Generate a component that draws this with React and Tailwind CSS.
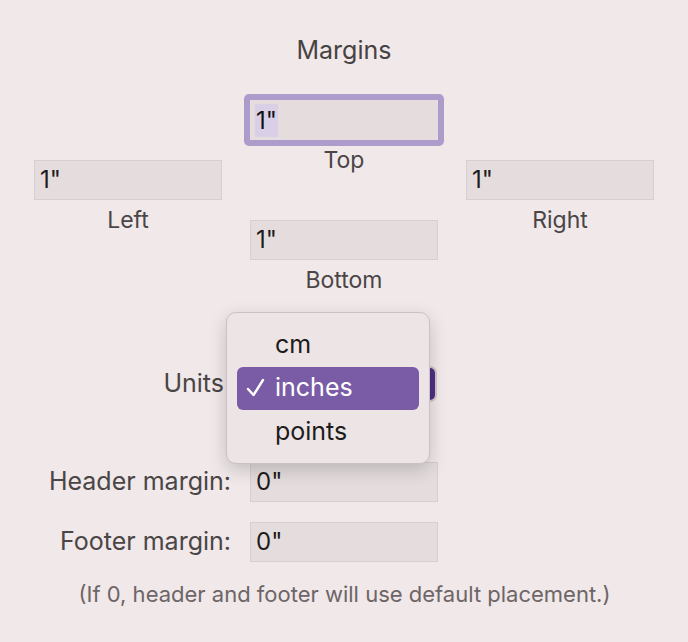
import React from 'react';

const font = { fontFamily: 'Inter, "Noto Sans", sans-serif' };

function Field({ value, className = '' }) {
  return (
    <div className={`h-10 w-[188px] bg-[#e5dddd] border border-[#d8d0d0] flex items-center px-[5px] text-[24px] text-[#1d1b1b] ${className}`}>
      {value}
    </div>
  );
}

function Label({ children }) {
  return (
    <div className="h-10 flex items-center justify-center text-[23px] text-[#4a4546]">{children}</div>
  );
}

export default function App() {
  return (
    <div className="w-[688px] h-[642px] bg-[#f0e8e9] flex flex-col items-center overflow-hidden" style={font}>
      <div className="mt-[36px] text-[25px] leading-7 text-[#474243]">Margins</div>

      <div className="mt-[36px] flex gap-7">
        <div className="flex flex-col mt-[60px]">
          <Field value={'1"'} />
          <Label>Left</Label>
        </div>
        <div className="flex flex-col">
          <div className="rounded-[5px] border-[6px] border-[#ad9bcb] -m-[6px]">
            <div className="h-10 w-[188px] bg-[#e5dddd] flex items-center px-[5px] text-[24px] text-[#111]">
              <span className="bg-[#d9d0e8] px-px leading-[33px]">1"</span>
            </div>
          </div>
          <Label>Top</Label>
          <div className="h-10" />
          <Field value={'1"'} />
          <Label>Bottom</Label>
        </div>
        <div className="flex flex-col mt-[60px]">
          <Field value={'1"'} />
          <Label>Right</Label>
        </div>
      </div>

      <div className="w-full flex flex-col mt-[66px]">
        <div className="relative flex items-center h-[36px]">
          <div className="w-[226px] text-right pr-[2px] text-[25px] text-[#4a4546]">Units</div>
          <div className="ml-[24px] h-[36px] w-[187px] rounded-[7px] border-[2px] border-[#cfc7c8] bg-[#e5dddd] flex justify-end">
            <div className="w-8 h-full rounded-[5px] bg-[#4f2f86]" />
          </div>
          <div className="absolute left-[226px] top-[-54px] w-[204px] h-[152px] rounded-[10px] border border-[#c9c1c2] bg-[#ece4e5] shadow-[0_6px_18px_rgba(0,0,0,0.18)] px-[10px] flex flex-col justify-center text-[25px] text-[#1d1b1b]">
            <div className="h-[44px] flex items-center pl-[38px]">cm</div>
            <div className="h-[43px] flex items-center rounded-[6px] bg-[#7a5ca6] text-white pl-[9px]">
              <svg width="19" height="20" viewBox="0 0 19 20" className="mr-[10px]">
                <path d="M2 11 L7.5 17 L17 2" fill="none" stroke="white" strokeWidth="2.4" strokeLinecap="round" strokeLinejoin="round" />
              </svg>
              inches
            </div>
            <div className="h-[44px] flex items-center pl-[38px]">points</div>
          </div>
        </div>

        <div className="flex items-center mt-[60px]">
          <div className="w-[231px] text-right text-[25px] text-[#4a4546]">Header margin:</div>
          <Field value={'0"'} className="ml-[19px]" />
        </div>
        <div className="flex items-center mt-[20px]">
          <div className="w-[231px] text-right text-[25px] text-[#4a4546]">Footer margin:</div>
          <Field value={'0"'} className="ml-[19px]" />
        </div>
        <div className="mt-[18px] leading-7 text-center text-[22px] text-[#6d6566] pl-[1px]">
          (If 0, header and footer will use default placement.)
        </div>
      </div>
    </div>
  );
}
